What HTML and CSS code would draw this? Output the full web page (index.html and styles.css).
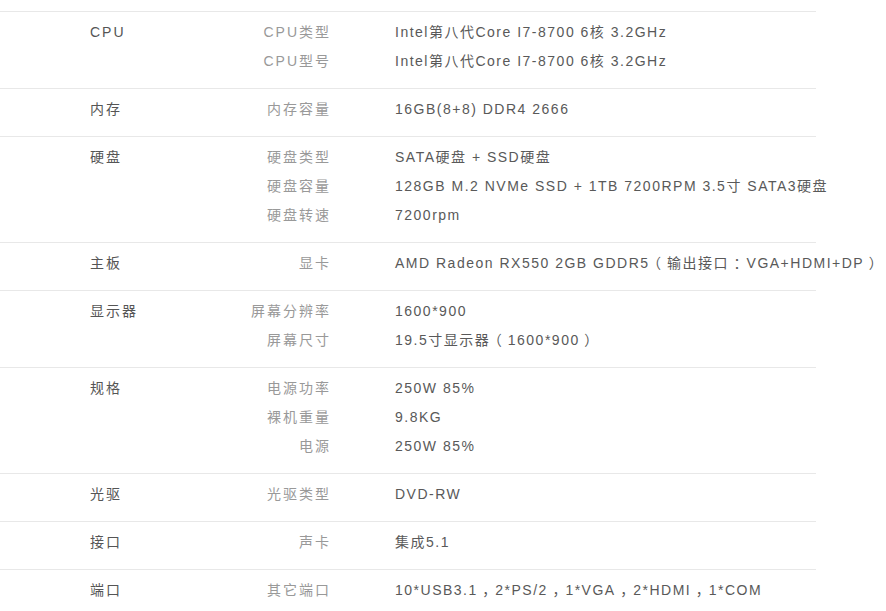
FILE: index.html
```html
<!DOCTYPE html>
<html lang="zh-CN">
<head>
<meta charset="utf-8">
<title>配置参数</title>
<link rel="stylesheet" href="styles.css">
</head>
<body>
<div class="spec">
  <div class="row">
    <div class="cat">CPU</div>
    <div class="labels"><div>CPU类型</div><div>CPU型号</div></div>
    <div class="vals"><div>Intel第八代Core I7-8700 6核 3.2GHz</div><div>Intel第八代Core I7-8700 6核 3.2GHz</div></div>
  </div>
  <div class="row">
    <div class="cat">内存</div>
    <div class="labels"><div>内存容量</div></div>
    <div class="vals"><div>16GB(8+8) DDR4 2666</div></div>
  </div>
  <div class="row">
    <div class="cat">硬盘</div>
    <div class="labels"><div>硬盘类型</div><div>硬盘容量</div><div>硬盘转速</div></div>
    <div class="vals"><div>SATA硬盘 + SSD硬盘</div><div>128GB M.2 NVMe SSD + 1TB 7200RPM 3.5寸 SATA3硬盘</div><div>7200rpm</div></div>
  </div>
  <div class="row">
    <div class="cat">主板</div>
    <div class="labels"><div>显卡</div></div>
    <div class="vals"><div>AMD Radeon RX550 2GB GDDR5<span class="p">（</span>输出接口<span class="p">：</span>VGA+HDMI+DP<span class="p">）</span></div></div>
  </div>
  <div class="row">
    <div class="cat">显示器</div>
    <div class="labels"><div>屏幕分辨率</div><div>屏幕尺寸</div></div>
    <div class="vals"><div>1600*900</div><div>19.5寸显示器<span class="p">（</span>1600*900<span class="p">）</span></div></div>
  </div>
  <div class="row">
    <div class="cat">规格</div>
    <div class="labels"><div>电源功率</div><div>裸机重量</div><div>电源</div></div>
    <div class="vals"><div>250W 85%</div><div>9.8KG</div><div>250W 85%</div></div>
  </div>
  <div class="row">
    <div class="cat">光驱</div>
    <div class="labels"><div>光驱类型</div></div>
    <div class="vals"><div>DVD-RW</div></div>
  </div>
  <div class="row">
    <div class="cat">接口</div>
    <div class="labels"><div>声卡</div></div>
    <div class="vals"><div>集成5.1</div></div>
  </div>
  <div class="row">
    <div class="cat">端口</div>
    <div class="labels"><div>其它端口</div></div>
    <div class="vals"><div>10*USB3.1<span class="p">，</span>2*PS/2<span class="p">，</span>1*VGA<span class="p">，</span>2*HDMI<span class="p">，</span>1*COM</div></div>
  </div>
</div>
</body>
</html>
```
FILE: styles.css
```css
html, body {
  margin: 0;
  padding: 0;
  background: #fff;
}
body {
  font-family: "Liberation Sans", Arial, "Noto Sans CJK SC", sans-serif;
  font-size: 14px;
  letter-spacing: 1.5px;
}
.spec {
  width: 816px;
  padding-top: 11px;
}
.row {
  display: grid;
  grid-template-columns: 250px 80px 1fr;
  border-top: 1px solid #e8e8e8;
  padding: 6px 0 12px;
  line-height: 29px;
}
.cat {
  padding-left: 90px;
  color: #555;
  letter-spacing: 2px;
}
.labels {
  text-align: right;
  color: #999;
  letter-spacing: 2px;
  margin-right: -1px;
}
.vals {
  padding-left: 65px;
  color: #595959;
  white-space: nowrap;
}
.p {
  display: inline-block;
  width: 16px;
  text-align: center;
  letter-spacing: 0;
  line-height: 1;
  font-feature-settings: "halt";
  margin-right: 1.5px;
}
```
